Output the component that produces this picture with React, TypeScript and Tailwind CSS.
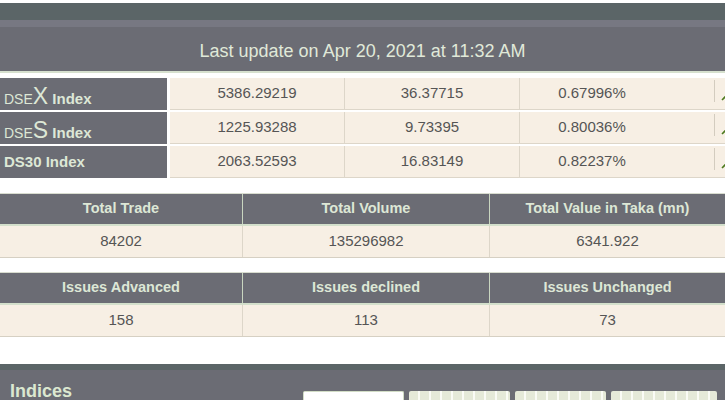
const indices = [
  { big: "X", value: "5386.29219", change: "36.37715", pct: "0.67996%" },
  { big: "S", value: "1225.93288", change: "9.73395", pct: "0.80036%" },
  { big: null, value: "2063.52593", change: "16.83149", pct: "0.82237%" },
];

const summaries = [
  {
    heads: ["Total Trade", "Total Volume", "Total Value in Taka (mn)"],
    values: ["84202", "135296982", "6341.922"],
  },
  {
    heads: ["Issues Advanced", "Issues declined", "Issues Unchanged"],
    values: ["158", "113", "73"],
  },
];

function UpArrow() {
  return (
    <svg width="10" height="10" viewBox="0 0 10 10" className="shrink-0">
      <path d="M1 9 L8 2 M4 2 H8 V6" stroke="#4d7a1e" strokeWidth="1.6" fill="none" />
    </svg>
  );
}

function IndexRow({ row }: { row: (typeof indices)[number] }) {
  return (
    <div className="flex h-[32px]">
      <div
        className={
          "w-[167px] shrink-0 bg-[#6b6c74] text-[#dde7d6] pl-[4px] flex " +
          (row.big ? "items-end pb-[2px]" : "items-center")
        }
      >
        {row.big ? (
          <span className="leading-none">
            <span className="text-[14px]">DSE</span>
            <span className="text-[23px]">{row.big}</span>
            <span className="text-[15px] font-bold"> Index</span>
          </span>
        ) : (
          <span className="text-[15px] font-bold">DS30 Index</span>
        )}
      </div>
      <div className="ml-[3px] flex-1 flex bg-[#f7efe4] border-b border-[#ddd6c9] text-[15px] text-[#555]">
        <div className="w-[175px] text-center pt-[4px] border-r border-[#ddd6c9]">{row.value}</div>
        <div className="w-[175px] text-center pt-[4px] border-r border-[#ddd6c9]">{row.change}</div>
        <div className="w-[194px] text-center pt-[4px] pr-[50px]">{row.pct}</div>
        <div className="flex-1 flex items-start pt-[2px]">
          <div className="w-px h-[22px] bg-[#d3ccbf]" />
          <div className="pt-[11px] pl-[6px]">
            <UpArrow />
          </div>
        </div>
      </div>
    </div>
  );
}

function SummaryTable({ heads, values }: { heads: string[]; values: string[] }) {
  const widths = ["w-[243px]", "w-[247px]", "flex-1"];
  return (
    <div className="border-t border-[#d8dccf]">
      <div className="flex h-[32px] bg-[#6b6c74] text-[#dde7d6] text-[14.5px] font-bold border-b-2 border-[#d3dfcb]">
        {heads.map((h, i) => (
          <div
            key={h}
            className={
              widths[i] +
              " flex items-center justify-center " +
              (i < 2 ? "border-r border-[#c9d6c0]" : "")
            }
          >
            {h}
          </div>
        ))}
      </div>
      <div className="flex h-[32px] bg-[#f7efe4] text-[#555] text-[15px] border-b border-[#d6d0c3]">
        {values.map((v, i) => (
          <div
            key={v}
            className={
              widths[i] +
              " flex items-center justify-center " +
              (i < 2 ? "border-r border-[#ddd6c9]" : "")
            }
          >
            {v}
          </div>
        ))}
      </div>
    </div>
  );
}

export default function App() {
  return (
    <div className="w-[725px] h-[400px] overflow-hidden bg-white pt-[3px] font-['Liberation_Sans',Arial,sans-serif]">
      <div className="h-[17px] bg-[#5b6567]" />
      <div className="h-[7px] bg-[#777882]" />
      <div className="h-[46px] bg-[#6b6c74] border-b-2 border-[#d6e0ce] flex items-center justify-center pt-[4px] text-[18px] text-[#e0e9d9]">
        Last update on Apr 20, 2021 at 11:32 AM
      </div>

      <div className="mt-[5px] flex flex-col gap-[2px]">
        {indices.map((row) => (
          <IndexRow key={row.value} row={row} />
        ))}
      </div>

      <div className="mt-[15px]">
        <SummaryTable {...summaries[0]} />
      </div>
      <div className="mt-[14px]">
        <SummaryTable {...summaries[1]} />
      </div>

      <div className="mt-[27px] h-[6px] bg-[#5b6567]" />
      <div className="h-[30px] bg-[#6b6c74] flex items-start">
        <div className="w-[303px] pl-[10px] pt-[12px] text-[18px] font-bold leading-none text-[#dbe8d0]">
          Indices
        </div>
        <div className="flex gap-[5px] pt-[21px]">
          <div className="w-[101px] h-[12px] bg-white border-t border-x border-[#d2ddc6] rounded-t-[2px]" />
          <div className="w-[101px] h-[12px] bg-[repeating-linear-gradient(90deg,#e5e9d8_0_9px,#fafbf5_9px_11px)] rounded-t-[2px]" />
          <div className="w-[91px] h-[12px] bg-[repeating-linear-gradient(90deg,#e5e9d8_0_9px,#fafbf5_9px_11px)] rounded-t-[2px]" />
          <div className="w-[106px] h-[12px] bg-[repeating-linear-gradient(90deg,#e5e9d8_0_9px,#fafbf5_9px_11px)] rounded-t-[2px]" />
        </div>
      </div>
    </div>
  );
}
